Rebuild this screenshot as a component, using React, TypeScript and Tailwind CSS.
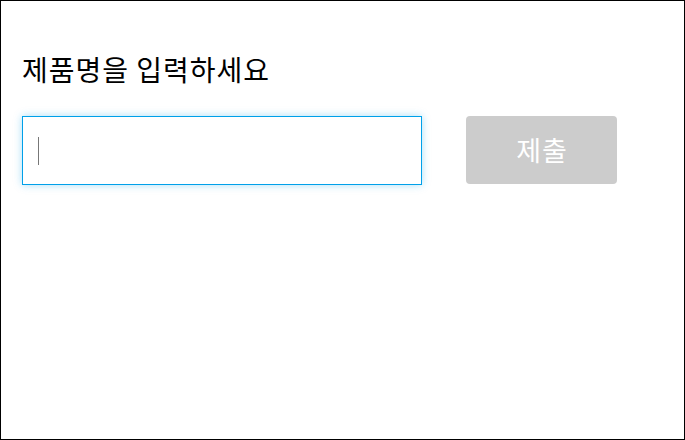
import { useState } from "react";

export default function App() {
  const [name, setName] = useState("");

  return (
    <div className="box-border h-[440px] w-[685px] border border-black bg-white font-['Noto_Sans_CJK_KR','Noto_Sans',sans-serif]">
      <div className="pl-[21px] pt-[48px]">
        <h1 className="text-[28px] leading-[40px] font-normal tracking-[1px] text-black">
          제품명을 입력하세요
        </h1>
        <div className="mt-[27px] flex items-start gap-[44px]">
          <div className="relative h-[69px] w-[400px]">
            <input
              type="text"
              value={name}
              onChange={(e) => setName(e.target.value)}
              className="box-border h-full w-full border border-[#00a0e9] bg-white px-4 text-2xl text-black shadow-[0_0_8px_rgba(0,160,233,0.35)] outline-none"
            />
            {name === "" && (
              <span className="pointer-events-none absolute left-[16px] top-[21px] h-[28px] w-px bg-[#777777]" />
            )}
          </div>
          <button
            type="button"
            disabled={!name}
            className="h-[68px] w-[151px] rounded-[4px] bg-[#cccccc] pl-[1px] text-[27px] tracking-[1px] text-white"
          >
            제출
          </button>
        </div>
      </div>
    </div>
  );
}
